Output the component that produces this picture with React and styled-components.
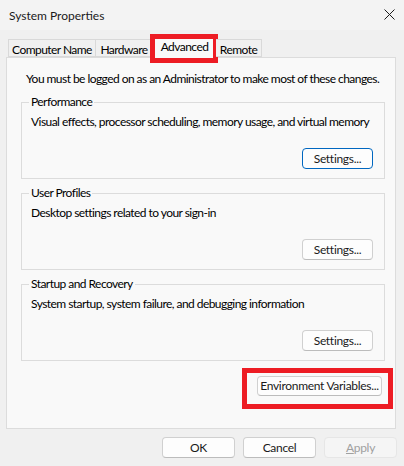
import React from "react";
import styled, { createGlobalStyle } from "styled-components";

const GlobalStyle = createGlobalStyle`
  html, body {
    margin: 0;
    padding: 0;
    background: #f0f0f0;
  }
  body {
    font-family: Lato, "Noto Sans", sans-serif;
    font-size: 12px;
    letter-spacing: -0.55px;
    color: #000;
  }
`;

const tabs = [
  { label: "Computer Name", width: 88 },
  { label: "Hardware", width: 57 },
  { label: "Advanced", width: 63 },
  { label: "Remote", width: 46 },
];

const groups = [
  {
    title: "Performance",
    text: "Visual effects, processor scheduling, memory usage, and virtual memory",
    focused: true,
  },
  { title: "User Profiles", text: "Desktop settings related to your sign-in" },
  {
    title: "Startup and Recovery",
    text: "System startup, system failure, and debugging information",
  },
];

export default function App() {
  return (
    <>
      <GlobalStyle />
      <Window>
        <TitleBar>
          <Title>System Properties</Title>
          <CloseButton aria-label="Close">
            <svg width="11" height="11" viewBox="0 0 11 11">
              <path d="M0.5 0.5 L10.5 10.5 M10.5 0.5 L0.5 10.5" stroke="#1b1b1b" strokeWidth="1" />
            </svg>
          </CloseButton>
        </TitleBar>

        <Body>
          <TabStrip>
            {tabs.map((tab) => (
              <Tab key={tab.label} $width={tab.width} $active={tab.label === "Advanced"}>
                {tab.label}
              </Tab>
            ))}
          </TabStrip>

          <Panel>
            <Intro>You must be logged on as an Administrator to make most of these changes.</Intro>

            {groups.map((g, i) => (
              <Group key={g.title} $first={i === 0}>
                <Legend>{g.title}</Legend>
                <GroupText>{g.text}</GroupText>
                <GroupActions>
                  <Button $focused={g.focused}>Settings...</Button>
                </GroupActions>
              </Group>
            ))}

            <EnvRow>
              <Highlight>
                <Button $wide>Environment Variables...</Button>
              </Highlight>
            </EnvRow>
          </Panel>

          <Footer>
            <Button $footer>OK</Button>
            <Button $footer>Cancel</Button>
            <Button $footer disabled>
              <u>A</u>pply
            </Button>
          </Footer>
        </Body>
      </Window>
    </>
  );
}

// Styled components start here --------------
const Window = styled.div`
  width: 404px;
  height: 466px;
  display: flex;
  flex-direction: column;
  background: #f0f0f0;
  overflow: hidden;
`;

const TitleBar = styled.div`
  height: 30px;
  flex: none;
  display: flex;
  align-items: center;
  justify-content: space-between;
  padding: 0 9px 0 9px;
  background: #f3f3f3;
  box-sizing: border-box;
`;

const Title = styled.span`
  font-size: 12px;
  letter-spacing: 0;
  color: #1a1a1a;
`;

const CloseButton = styled.span`
  display: flex;
  width: 11px;
  height: 11px;
  margin-right: 0;
  margin-top: -2px;
`;

const Body = styled.div`
  flex: 1;
  display: flex;
  flex-direction: column;
  padding-top: 9px;
`;

const TabStrip = styled.div`
  display: flex;
  align-items: flex-end;
  height: 18px;
  padding-left: 8px;
  position: relative;
  z-index: 1;
`;

const Tab = styled.div`
  position: relative;
  box-sizing: border-box;
  width: ${(p) => p.$width}px;
  height: ${(p) => (p.$active ? "22px" : "18px")};
  margin-bottom: ${(p) => (p.$active ? "-1px" : "0")};
  padding-top: ${(p) => (p.$active ? "2px" : "2px")};
  text-align: center;
  border: 1px solid #d9d9d9;
  border-bottom: ${(p) => (p.$active ? "none" : "1px solid #d9d9d9")};
  border-left: ${(p) => (p.$active ? "1px solid #d9d9d9" : "none")};
  background: ${(p) => (p.$active ? "#f9f9f9" : "#f0f0f0")};
  line-height: 15px;
  white-space: nowrap;

  &:first-child {
    border-left: 1px solid #d9d9d9;
  }

  ${(p) =>
    p.$active &&
    `
    &::after {
      content: "";
      position: absolute;
      top: -3px;
      left: -4px;
      right: -3px;
      bottom: -5px;
      border: 5px solid #ed1c24;
    }
  `}
`;

const Panel = styled.div`
  box-sizing: border-box;
  margin: 0 8px 0 6px;
  height: 372px;
  padding: 13px 10px 0 14px;
  border: 1px solid #dcdcdc;
  background: #f9f9f9;
  display: flex;
  flex-direction: column;
`;

const Intro = styled.div`
  line-height: 16px;
  padding-left: 5px;
  white-space: nowrap;
`;

const Group = styled.fieldset`
  margin: ${(p) => (p.$first ? "7px" : "6px")} 0 0 0;
  padding: 0 11px 9px 9px;
  border: 1px solid #dcdcdc;
  min-width: 0;
`;

const Legend = styled.legend`
  padding: 0 2px;
  margin-left: -2px;
  line-height: 16px;
`;

const GroupText = styled.div`
  line-height: 16px;
  margin-top: 4px;
  white-space: nowrap;
`;

const GroupActions = styled.div`
  display: flex;
  justify-content: flex-end;
  margin-top: 18px;
`;

const Button = styled.button`
  box-sizing: border-box;
  font-family: inherit;
  font-size: 12px;
  letter-spacing: -0.3px;
  white-space: nowrap;
  color: ${(p) => (p.disabled ? "#a0a0a0" : "#1a1a1a")};
  height: ${(p) => (p.$wide ? "20px" : "21px")};
  width: ${(p) => (p.$wide ? "125px" : p.$footer ? "73px" : "71px")};
  padding: 0;
  line-height: 18px;
  background: ${(p) => (p.disabled ? "#f5f5f5" : "#fdfdfd")};
  border: 1px solid ${(p) => (p.$focused ? "#0067c0" : p.disabled ? "#e6e6e6" : "#d0d0d0")};
  border-bottom-color: ${(p) => (p.$focused ? "#0067c0" : p.disabled ? "#e6e6e6" : "#bcbcbc")};
  border-radius: 4px;
  cursor: default;
`;

const EnvRow = styled.div`
  display: flex;
  justify-content: flex-end;
  margin-top: 7px;
  margin-right: -8px;
`;

const Highlight = styled.div`
  display: flex;
  border: 5px solid #ed1c24;
  padding: 3px 6px 8px 10px;
`;

const Footer = styled.div`
  display: flex;
  justify-content: flex-end;
  gap: 8px;
  padding: 8px 7px 0 0;
`;
// Styled components end here --------------
